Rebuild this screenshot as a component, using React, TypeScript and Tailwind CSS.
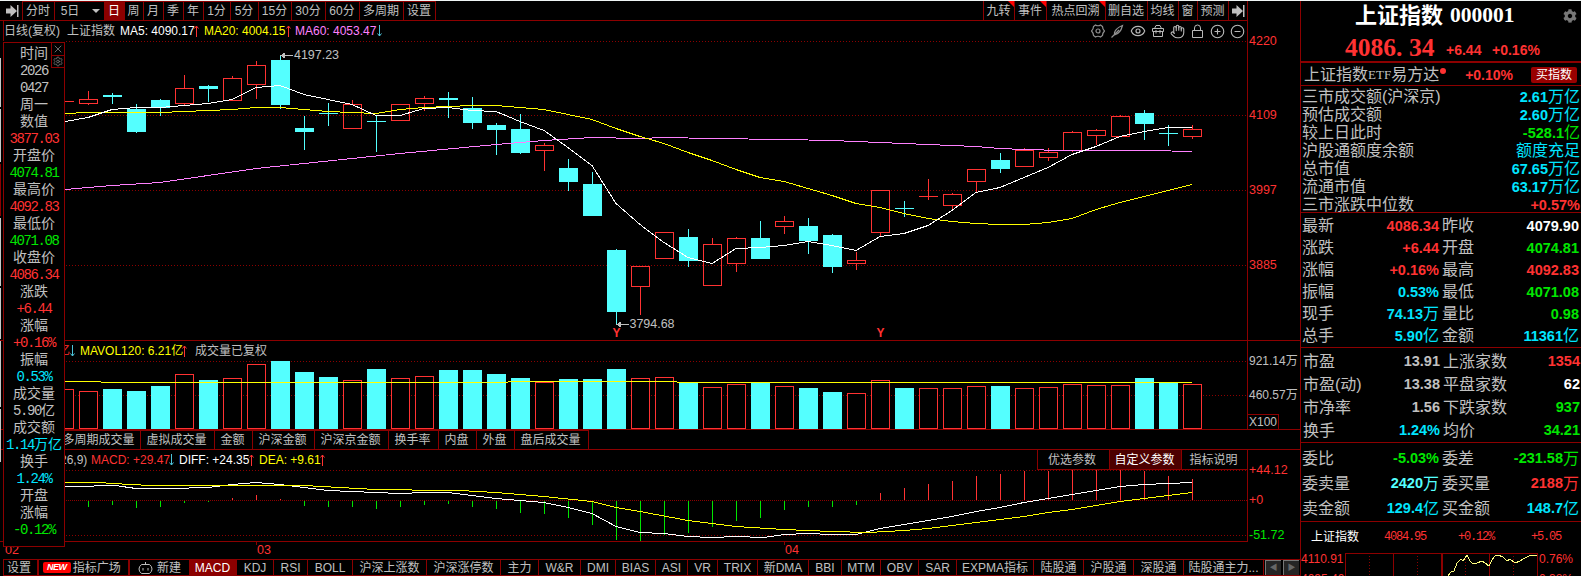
import clsx from 'clsx'
import { CircleMinus, CirclePlus, Eye, Hand, Lock, Settings, X } from 'lucide-react'
import { FaCog } from 'react-icons/fa'

const RED = '#ff3232'
const CYAN = '#54ffff'
const DARK = '#8c0000'

/* x centre, high, body top, body bottom, low, volume top, rising */
const candles = [
    [64, 101, 101, 102, 102, 389, 1],
    [88, 91, 99, 104, 105, 391, 1],
    [112, 93, 95, 97, 104, 389, 0],
    [136, 104, 109, 132, 133, 391, 0],
    [160, 99, 100, 108, 116, 386, 0],
    [184, 75, 88, 104, 105, 374, 1],
    [208, 85, 86, 89, 102, 380, 0],
    [232, 76, 78, 101, 101, 378, 1],
    [256, 61, 65, 85, 99, 364, 1],
    [280, 55, 60, 105, 109, 361, 0],
    [304, 116, 128, 132, 150, 372, 0],
    [328, 103, 113, 114, 126, 377, 0],
    [352, 100, 104, 129, 129, 380, 1],
    [376, 115, 121, 122, 152, 369, 0],
    [400, 104, 104, 121, 121, 378, 1],
    [424, 96, 98, 104, 111, 376, 1],
    [448, 92, 98, 100, 118, 370, 0],
    [472, 97, 108, 123, 129, 370, 0],
    [496, 123, 125, 130, 155, 374, 0],
    [520, 114, 129, 153, 154, 378, 0],
    [544, 143, 145, 151, 171, 382, 1],
    [568, 159, 168, 182, 191, 379, 0],
    [592, 172, 184, 216, 216, 379, 0],
    [616, 249, 250, 312, 325, 369, 0],
    [640, 266, 266, 287, 315, 378, 1],
    [664, 232, 232, 259, 259, 377, 1],
    [688, 229, 237, 261, 267, 383, 0],
    [712, 238, 244, 286, 286, 387, 1],
    [736, 237, 238, 264, 272, 384, 1],
    [760, 221, 238, 259, 259, 383, 0],
    [784, 216, 221, 227, 234, 386, 1],
    [808, 218, 226, 241, 254, 388, 0],
    [832, 234, 235, 267, 273, 392, 0],
    [856, 252, 260, 264, 270, 393, 1],
    [880, 190, 190, 233, 236, 380, 1],
    [904, 201, 208, 209, 217, 388, 0],
    [928, 179, 196, 197, 200, 388, 1],
    [952, 193, 194, 206, 209, 388, 1],
    [976, 169, 169, 182, 192, 386, 1],
    [1000, 153, 160, 169, 173, 386, 0],
    [1024, 148, 150, 167, 167, 388, 1],
    [1048, 148, 152, 158, 161, 387, 1],
    [1072, 131, 132, 151, 152, 384, 1],
    [1096, 129, 130, 136, 145, 385, 1],
    [1120, 115, 116, 137, 137, 385, 1],
    [1144, 110, 113, 124, 140, 378, 0],
    [1168, 125, 133, 134, 146, 382, 0],
    [1192, 125, 129, 137, 139, 384, 1],
]

/* tips of the MACD bars, the first one stands at x = 88 */
const macd = [
    507, 505, 508, 507, 503, 501, 498, 495, 499, 506, 507, 507, 509, 507, 505, 504, 507, 509, 513, 514, 518, 525, 540, 541,
    535, 533, 527, 521, 518, 510, 507, 507, 505, 493, 488, 484, 481, 476, 474, 471, 471, 470, 470, 470, 471, 476, 479,
]

const ma5 =
    '65,121 88,117 112,109 136,107 160,107 184,105 208,103 232,99 256,87 280,85 304,94 328,99 352,104 376,115 400,115 424,108 448,107 472,110 496,111 520,121 544,130 568,147 592,165 616,203 640,224 664,242 688,257 712,263 736,248 760,247 784,245 808,241 832,245 856,250 880,236 904,233 928,225 952,210 976,192 1000,187 1024,177 1048,167 1072,154 1096,146 1120,136 1144,131 1168,127 1192,127'
const ma20 =
    '65,113 88,112 160,112 184,111 208,110 232,109 256,107 280,107 304,109 328,111 352,112 376,113 400,109 424,107 448,106 472,105 496,105 520,107 544,109 568,114 592,119 616,128 640,136 664,143 688,152 712,160 736,169 760,177 784,181 808,188 832,195 856,203 880,207 904,213 928,218 952,221 976,223 1000,224 1024,224 1048,222 1072,218 1096,209 1120,202 1144,196 1168,190 1192,184'
const ma60 =
    '65,189 112,185 160,182 208,175 256,168 304,163 352,158 400,153 448,148.5 496,144 544,140 592,137 640,138 664,137 712,138 784,139 832,140 880,142 928,144 976,146 1000,148 1024,149 1064,150 1150,150 1192,151'
const diff =
    '65,486 88,486 100,485 115,485 136,488 170,488 208,487 232,484 256,482 280,484 304,487 328,490 376,492 400,493 424,492 448,492 472,495 496,498 520,500 544,502 568,507 592,513 616,526 640,532 664,533 688,536 712,537 736,536 764,537 784,534 808,533 832,534 856,534 880,528 904,524 928,520 952,516 976,511 1000,507 1024,502 1048,498 1072,494 1096,490 1120,486 1144,484 1168,483 1192,482'
const dea =
    '65,482 100,482 112,483 150,485 220,485 280,485 304,485 340,487 376,489 400,489 424,490 460,490 496,492 544,496 592,501 616,507 640,511 688,520 736,526 784,529 832,531 868,532 904,530 928,528 952,525 976,522 1000,519 1024,516 1048,512 1072,509 1096,505 1120,501 1144,498 1168,495 1192,492'

const periods = [
    { name: '分时', width: 'w-8' },
    { name: '5日', width: 'w-[49px]', arrow: true },
    { name: '日', width: 'w-[21px]', active: true },
    { name: '周', width: 'w-[19px]' },
    { name: '月', width: 'w-5' },
    { name: '季', width: 'w-5' },
    { name: '年', width: 'w-5' },
    { name: '1分', width: 'w-[27px]' },
    { name: '5分', width: 'w-7' },
    { name: '15分', width: 'w-[33px]' },
    { name: '30分', width: 'w-[34px]' },
    { name: '60分', width: 'w-[34px]' },
    { name: '多周期', width: 'w-[44px]' },
    { name: '设置', width: 'w-8' },
]

const tools = [
    { name: '九转', width: 'w-[31px]', mark: true },
    { name: '事件', width: 'w-8', mark: true },
    { name: '热点回溯', width: 'w-[59px]', mark: true },
    { name: '删自选', width: 'w-[42px]' },
    { name: '均线', width: 'w-[31px]' },
    { name: '窗', width: 'w-[19px]' },
    { name: '预测', width: 'w-[31px]' },
]

const volumeTabs = [
    { name: '多周期成交量', width: 'w-[82px]' },
    { name: '虚拟成交量', width: 'w-[74px]' },
    { name: '金额', width: 'w-[38px]' },
    { name: '沪深金额', width: 'w-[62px]' },
    { name: '沪深京金额', width: 'w-[74px]' },
    { name: '换手率', width: 'w-[50px]' },
    { name: '内盘', width: 'w-[38px]' },
    { name: '外盘', width: 'w-[38px]' },
    { name: '盘后成交量', width: 'w-[74px]' },
]

const indicators = [
    { name: 'MACD', width: 'w-[48px]', active: true },
    { name: 'KDJ', width: 'w-[37px]' },
    { name: 'RSI', width: 'w-[34px]' },
    { name: 'BOLL', width: 'w-[45px]' },
    { name: '沪深上涨数', width: 'w-[74px]' },
    { name: '沪深涨停数', width: 'w-[74px]' },
    { name: '主力', width: 'w-[38px]' },
    { name: 'W&R', width: 'w-[42px]' },
    { name: 'DMI', width: 'w-[35px]' },
    { name: 'BIAS', width: 'w-[40px]' },
    { name: 'ASI', width: 'w-8' },
    { name: 'VR', width: 'w-[30px]' },
    { name: 'TRIX', width: 'w-10' },
    { name: '新DMA', width: 'w-[51px]' },
    { name: 'BBI', width: 'w-[33px]' },
    { name: 'MTM', width: 'w-[39px]' },
    { name: 'OBV', width: 'w-[38px]' },
    { name: 'SAR', width: 'w-[38px]' },
    { name: 'EXPMA指标', width: 'w-[77px]' },
    { name: '陆股通', width: 'w-[50px]' },
    { name: '沪股通', width: 'w-[50px]' },
    { name: '深股通', width: 'w-[50px]' },
    { name: '陆股通主力...', width: 'w-20' },
]

const gray = 'text-[#c0c0c0]'
const red = 'text-[#ff3232]'
const green = 'text-[#00e600]'
const cyan = 'text-[#00e5ff]'

const dataRows = [
    ['时间', gray], ['2026', gray], ['0427', gray], ['周一', gray],
    ['数值', gray], ['3877.03', red],
    ['开盘价', gray], ['4074.81', green],
    ['最高价', gray], ['4092.83', red],
    ['最低价', gray], ['4071.08', green],
    ['收盘价', gray], ['4086.34', red],
    ['涨跌', gray], ['+6.44', red],
    ['涨幅', gray], ['+0.16%', red],
    ['振幅', gray], ['0.53%', cyan],
    ['成交量', gray], ['5.90亿', gray],
    ['成交额', gray], ['1.14万亿', cyan],
    ['换手', gray], ['1.24%', cyan],
    ['开盘', gray], ['涨幅', gray], ['-0.12%', green],
]

const market = [
    ['三市成交额(沪深京)', '2.61', '万亿', cyan],
    ['预估成交额', '2.60', '万亿', cyan],
    ['较上日此时', '-528.1', '亿', green],
    ['沪股通额度余额', '', '额度充足', cyan],
    ['总市值', '67.65', '万亿', cyan],
    ['流通市值', '63.17', '万亿', cyan],
    ['三市涨跌中位数', '+0.57%', '', red],
]

const quotes = [
    ['最新', '4086.34', '', red, '昨收', '4079.90', '', 'text-white'],
    ['涨跌', '+6.44', '', red, '开盘', '4074.81', '', green],
    ['涨幅', '+0.16%', '', red, '最高', '4092.83', '', red],
    ['振幅', '0.53%', '', cyan, '最低', '4071.08', '', green],
    ['现手', '74.13', '万', cyan, '量比', '0.98', '', green],
    ['总手', '5.90', '亿', cyan, '金额', '11361', '亿', cyan],
]

const breadth = [
    ['市盈', '13.91', '', gray, '上涨家数', '1354', '', red],
    ['市盈(动)', '13.38', '', gray, '平盘家数', '62', '', 'text-white'],
    ['市净率', '1.56', '', gray, '下跌家数', '937', '', green],
    ['换手', '1.24%', '', cyan, '均价', '34.21', '', green],
]

const orders = [
    ['委比', '-5.03%', '', green, '委差', '-231.58', '万', green],
    ['委卖量', '2420', '万', 'text-[#54ffff]', '委买量', '2188', '万', red],
    ['卖金额', '129.4', '亿', cyan, '买金额', '148.7', '亿', cyan],
]

function Arrow({ down = false }: { down?: boolean }) {
    return (
        <svg width="6" height="12" viewBox="0 0 6 12" fill="none" stroke={down ? '#4cc3d9' : RED} className="shrink-0">
            {down ? <path d="M2.500 0V11M.5 8.500l2 2.500 2-2.500" /> : <path d="M2.500 12V1M.5 3.500l2-2.500 2 2.500" />}
        </svg>
    )
}

function SkipIcon() {
    return (
        <svg width="13" height="12" viewBox="0 0 13 12" fill="#c0c0c0" className="shrink-0">
            <path d="M0 3.500h4.500V0L11 6l-6.500 6V8.500H0zM11 0h1.500v12H11z" />
        </svg>
    )
}

function Grid({ rows }: { rows: number[] }) {
    return rows.map((y) => (
        <line key={y} x1="66" x2="1247" y1={y + 0.5} y2={y + 0.5} stroke={DARK} strokeDasharray="1 2" />
    ))
}

function PriceChart() {
    return (
        <svg width="1182" height="299" viewBox="65 41 1182 299" shapeRendering="crispEdges">
            <Grid rows={[41, 115, 190, 265]} />
            {candles.map(([x, high, top, bottom, low, , up]) => (
                <g key={x} fill={up ? RED : CYAN}>
                    <rect x={x} y={high} width="1" height={Math.max(top - high, 0)} />
                    <rect x={x} y={bottom} width="1" height={Math.max(low - bottom, 0)} />
                    {up && bottom - top > 1 ? (
                        <rect x={x - 8.5} y={top + 0.5} width="18" height={bottom - top - 1} fill="none" stroke={RED} />
                    ) : (
                        <rect x={x - 9} y={top} width="19" height={bottom - top} />
                    )}
                </g>
            ))}
            <g fill="none" transform="translate(0 .5)">
                <polyline points={ma60} stroke="#ff80ff" />
                <polyline points={ma20} stroke="#ffff00" />
                <polyline points={ma5} stroke="#ffffff" />
            </g>
            <g stroke="#c0c0c0" fill="#c0c0c0">
                <path d="M281 55.500h12M281 55.500l3-2v4z" />
                <path d="M617 324.500h12M617 324.500l3-2v4z" />
            </g>
            <g fill="#c0c0c0" fontSize="12.500" fontFamily="'Liberation Sans', sans-serif">
                <text x="294" y="59" textLength="45">4197.23</text>
                <text x="629.500" y="328" textLength="45">3794.68</text>
            </g>
            <g fill={RED} fontSize="12" fontWeight="bold" fontFamily="'Liberation Sans', sans-serif">
                <text x="612.500" y="337">Y</text>
                <text x="876.500" y="337">Y</text>
            </g>
        </svg>
    )
}

function VolumeChart() {
    return (
        <svg width="1182" height="69" viewBox="65 360 1182 69" shapeRendering="crispEdges">
            <Grid rows={[361, 395]} />
            {candles.map(([x, , , , , top, up]) =>
                up ? (
                    <rect key={x} x={x - 8.5} y={top + 0.5} width="18" height={428 - top} fill="#000" stroke={RED} />
                ) : (
                    <rect key={x} x={x - 9} y={top} width="19" height={429 - top} fill={CYAN} />
                ),
            )}
            <path d="M65 381.500H101M101 382.500H508M508 381.500H677M677 382.500H1192" stroke="#ffff00" />
        </svg>
    )
}

function MacdChart() {
    return (
        <svg width="1182" height="72" viewBox="65 469 1182 72" shapeRendering="crispEdges">
            <Grid rows={[470, 535]} />
            <line x1="66" x2="1247" y1="500.500" y2="500.500" stroke={DARK} strokeDasharray="1 1" />
            {macd.map((y, i) => (
                <rect
                    key={i}
                    x={88 + i * 24}
                    y={y < 500 ? y : 501}
                    width="1"
                    height={y < 500 ? 500 - y : Math.max(y - 501, 1)}
                    fill={y < 500 ? RED : '#00e600'}
                />
            ))}
            <g fill="none" transform="translate(0 .5)">
                <polyline points={diff} stroke="#ffffff" />
                <polyline points={dea} stroke="#ffff00" />
            </g>
        </svg>
    )
}

function Toolbar() {
    return (
        <div className="flex h-5 w-[1248px] border-r border-b border-[#8c0000]">
            <div className="flex w-[23px] items-center justify-end border-r border-[#8c0000] pr-[3px]">
                <SkipIcon />
            </div>
            {periods.map((item) => (
                <div
                    key={item.name}
                    className={clsx(
                        'flex shrink-0 items-center justify-center border-t border-[#8c0000] pr-px whitespace-nowrap',
                        item.width,
                        item.active ? 'bg-[#8c0000] text-white' : !item.arrow && 'border-r',
                    )}
                >
                    {item.name}
                    {item.arrow && <span className="-mr-[3px] ml-[13px] border-x-4 border-t-4 border-x-transparent border-t-[#c0c0c0]" />}
                </div>
            ))}
            <div className="ml-auto flex border-l border-[#8c0000]">
                {tools.map((item) => (
                    <div key={item.name} className={clsx('relative flex items-center justify-center border-r border-[#8c0000] pr-px whitespace-nowrap', item.width)}>
                        {item.name}
                        {item.mark && <span className="absolute top-0 right-0 border-t-[6px] border-l-[6px] border-t-[#ff0000] border-l-transparent" />}
                    </div>
                ))}
                <div className="flex w-[18px] items-center justify-center">
                    <SkipIcon />
                </div>
            </div>
        </div>
    )
}

function ChartIcons() {
    return (
        <div className="mr-[2px] ml-auto flex items-center gap-[5px] text-[#b8b8b8]">
            <svg width="14" height="14" viewBox="0 0 14 14" fill="none" stroke="#909090" strokeWidth="1.200">
                <path d="M4.500 1q2.500 1.500 5 0l2 1.500q0 2.500 2 4.500-2 2-2 4.500l-2 1.500q-2.500-1.500-5 0l-2-1.500q0-2.500-2-4.500 2-2 2-4.500z" />
                <circle cx="7" cy="7" r="2" />
            </svg>
            <svg width="15" height="15" viewBox="0 0 15 15" fill="none" stroke="#909090" strokeWidth="1.200">
                <path d="M1.500 13.500 9 6M12.500 1.500Q6 4 4.500 8.500V11Q10.500 9.500 12.500 1.500z" />
            </svg>
            <Eye size={16} strokeWidth={1.800} />
            <svg width="14" height="14" viewBox="0 0 14 14" fill="none" stroke="currentColor">
                <path d="M3.500 4.500 5 1.500h4l1.500 3M1.500 4.500h11v3h-11zM2.500 7.500v5h9v-5M5 6v3.500M9 6v3.500" />
            </svg>
            <Hand size={15} strokeWidth={1.800} />
            <svg width="15" height="15" viewBox="0 0 15 15" fill="none" stroke="currentColor">
                <path d="M2.500 6.500h10v7h-10zM4.500 6V4a3 3 0 0 1 6 0v2" />
            </svg>
            <CirclePlus size={15} strokeWidth={1.800} />
            <CircleMinus size={15} strokeWidth={1.800} />
        </div>
    )
}

function DataPanel() {
    return (
        <div className="absolute top-[41px] left-[3px] flex h-[505px] w-[62px] flex-col items-center border border-[#8c0000] bg-black pt-[3px]">
            {dataRows.map(([text, color], i) => (
                <div key={i} className={clsx('h-[17px] font-[Liberation_Mono,Noto_Sans_CJK_SC,monospace] text-[14px]/[17px] whitespace-nowrap', color)}>
                    {text.split(/([万亿]+)/).map((part, n) => (
                        <span key={n} className={/^[-+.%\d]+$/.test(part) ? 'tracking-[-1.4px]' : ''}>
                            {part}
                        </span>
                    ))}
                </div>
            ))}
            <div className="absolute -top-px -right-px flex w-[14px] flex-col border border-[#8c0000] text-[#777]">
                <X size={12} strokeWidth={1.800} />
                <Settings size={12} strokeWidth={1.800} className="border-t border-[#8c0000]" />
            </div>
        </div>
    )
}

function IndicatorBar() {
    return (
        <div className="ml-[3px] flex h-[17px] w-[1297px] border-y border-l border-[#8c0000] text-[12px] leading-none">
            <div className="flex w-[34px] items-center justify-center border-r border-[#8c0000] pr-[3px]">设置</div>
            <div className="flex w-[91px] items-center gap-[2px] border-x border-[#8c0000] pl-1">
                <span className="rounded-xs bg-[#ff0000] px-1 text-[9px]/[11px] font-bold tracking-tighter text-white italic">NEW</span>
                指标广场
            </div>
            <div className="flex w-[60px] items-center gap-[4px] border-l border-[#8c0000] pl-2">
                <svg width="15" height="12" viewBox="0 0 15 12" fill="none" stroke="#c0c0c0">
                    <path d="M7.500 0v2M3.500 2.500h8q2.500 2 2.500 4.500t-2.500 4.500h-8Q1 9.500 1 7t2.500-4.500z" />
                    <path d="M5 6v2.500M10 6v2.500" />
                </svg>
                新建
            </div>
            {indicators.map((item) => (
                <div
                    key={item.name}
                    className={clsx(
                        'flex shrink-0 items-center justify-center border-r border-[#8c0000] whitespace-nowrap',
                        item.width,
                        item.active && 'bg-[#8c0000] text-white',
                    )}
                >
                    {item.name}
                </div>
            ))}
            <div className="ml-px flex gap-[2px] text-[8px] text-[#666]">
                <span className="flex w-4 items-center justify-center border-t border-l border-[#777] bg-[#252525]">◀</span>
                <span className="flex w-4 items-center justify-center border-t border-l border-[#777] bg-[#252525]">▶</span>
            </div>
        </div>
    )
}

function Value({ number, unit, color }: { number: string; unit: string; color: string }) {
    return (
        <span className={clsx('ml-auto flex items-center', color)}>
            <b className="text-[14.5px]">{number}</b>
            {unit}
        </span>
    )
}

function PairRows({ rows, height }: { rows: string[][]; height: string }) {
    return (
        <div className={clsx('flex flex-col border-b border-[#8c0000]', height)}>
            {rows.map((row) => (
                <div key={row[0]} className="flex flex-1 items-center">
                    <div className="flex w-[137px] items-center">
                        {row[0]}
                        <Value number={row[1]} unit={row[2]} color={row[3]} />
                    </div>
                    <div className="ml-[3px] flex w-[137px] items-center">
                        {row[4]}
                        <Value number={row[5]} unit={row[6]} color={row[7]} />
                    </div>
                </div>
            ))}
        </div>
    )
}

function QuotePanel() {
    return (
        <aside className="flex w-[281px] flex-col overflow-hidden border-l border-[#8c0000] text-[16px] leading-none whitespace-nowrap text-[#c0c0c0]">
            <div className="flex h-[60px] flex-col">
                <div className="flex h-7 items-center pt-px pl-[54px] font-[Liberation_Serif,Noto_Sans_CJK_SC,serif] text-[22px] font-bold text-white">
                    上证指数
                    <span className="ml-[7px] text-[21.5px]">000001</span>
                    <FaCog size={14} className="mr-[4px] ml-auto text-[#777]" />
                </div>
                <div className="flex h-8 items-center pt-[4px] pl-[44px] text-[#ff3232]">
                    <span className="w-[101px] pt-px font-[Liberation_Serif,serif] text-[25.5px] font-bold">
                        4086<span className="tracking-[6.5px]">.</span>34
                    </span>
                    <b className="mt-[5px] w-[46px] text-[14px]">+6.44</b>
                    <b className="mt-[5px] text-[14px]">+0.16%</b>
                </div>
            </div>
            <div className="flex h-[25px] items-center border-t-2 border-b border-[#8c0000] pt-px pl-[3px]">
                上证指数<span className="font-[Liberation_Serif,serif] text-[13px]">ETF</span>易方达
                <i className="mb-2 ml-px size-[6px] rounded-full bg-[#ff3232]" />
                <b className="ml-[19px] text-[14px] text-[#ff3232]">+0.10%</b>
                <span className="mr-1 ml-auto flex h-4 w-[46px] items-center justify-center rounded-xs bg-[#990000] text-[12px] text-white">买指数</span>
            </div>
            <div className="flex h-[127px] flex-col border-b border-[#8c0000] pt-px pl-px">
                {market.map((row) => (
                    <div key={row[0]} className="flex h-[18px] w-[278px] items-center pt-[2px]">
                        {row[0]}
                        <Value number={row[1]} unit={row[2]} color={row[3]} />
                    </div>
                ))}
            </div>
            <PairRows rows={quotes} height="h-[135px] pt-[2px] pl-[1px]" />
            <PairRows rows={breadth} height="h-[95px] pt-[2px] pl-[2px]" />
            <PairRows rows={orders} height="h-[79px] pt-[3px] pl-[1px]" />
            <div className="flex h-[29px] items-center pt-px pl-[10px] text-[12px]">
                <span className="w-[73px] text-white">上证指数</span>
                <span className="w-[74px] font-[Liberation_Mono,monospace] tracking-[-1.2px] text-[#ff3232]">4084.95</span>
                <span className="w-[73px] font-[Liberation_Mono,monospace] tracking-[-1.2px] text-[#ff3232]">+0.12%</span>
                <span className="font-[Liberation_Mono,monospace] tracking-[-1.2px] text-[#ff3232]">+5.05</span>
            </div>
            <div className="flex h-[25px] overflow-hidden text-[12px]/[14px] text-[#ff3232]">
                <div className="flex w-11 flex-col gap-[6px] pt-px">
                    <span>4110.91</span>
                    <span>4095.40</span>
                </div>
                <svg width="193" height="25" viewBox="1345 551 193 25" fill="none" stroke={DARK} shapeRendering="crispEdges" className="shrink-0">
                    <path d="M1345.500 576V553.500H1537.500V576M1393.500 553V576M1489.500 553V576" />
                    <path d="M1442 553V576" strokeWidth="2" />
                    <path d="M1369.500 556V576M1417.500 556V576M1465.500 556V576M1513.500 556V576" strokeDasharray="1 2" />
                    <polyline
                        stroke="#ffff80"
                        points="1443,576 1447,577 1451,572 1454,571 1457,563 1461,559 1463,561 1467,555 1470,561 1473,564 1477,563 1482,561 1485,563 1489,566 1492,560 1495,556 1498,555 1503,557 1507,561 1510,559 1515,563 1520,561 1525,558 1529,556 1533,555 1537,556"
                    />
                </svg>
                <div className="ml-px flex flex-col gap-[6px] pt-px">
                    <span>0.76%</span>
                    <span>0.38%</span>
                </div>
            </div>
        </aside>
    )
}

export default function App() {
    return (
        <div className="relative flex h-[576px] w-[1581px] overflow-hidden border-t border-[#eef4f4] bg-black font-[Liberation_Sans,Noto_Sans_CJK_SC,sans-serif]">
            <main className="flex w-[1300px] flex-col text-[12px] leading-none text-[#c0c0c0]">
                <Toolbar />
                <section className="flex h-[320px] border-b border-[#8c0000]">
                    <div className="flex w-[1248px] flex-col border-r border-[#8c0000]">
                        <div className="ml-[3px] flex h-5 items-center border-l border-[#8c0000] whitespace-nowrap">
                            <span className="w-[63px]">日线(复权)</span>
                            <span className="w-[53px]">上证指数</span>
                            <span className="w-[74px] text-white">MA5: 4090.17</span>
                            <Arrow />
                            <span className="ml-[4px] w-[82px] text-[#ffff00]">MA20: 4004.15</span>
                            <Arrow />
                            <span className="ml-[3px] w-[82px] text-[#ff80ff]">MA60: 4053.47</span>
                            <Arrow down />
                            <ChartIcons />
                        </div>
                        <div className="ml-[65px]">
                            <PriceChart />
                        </div>
                    </div>
                    <div className="flex flex-col pt-3 pl-px text-[12.500px] leading-4 text-[#ff3232]">
                        <span>4220</span>
                        <span className="mt-[58px]">4109</span>
                        <span className="mt-[59px]">3997</span>
                        <span className="mt-[59px]">3885</span>
                    </div>
                </section>
                <section className="flex h-[89px] border-b border-[#8c0000]">
                    <div className="flex w-[1248px] flex-col border-r border-[#8c0000]">
                        <div className="flex h-[19px] items-center pt-px pl-[58px] whitespace-nowrap">
                            <span className="w-[12px] text-[#ff3232]">亿</span>
                            <Arrow down />
                            <span className="ml-[4px] w-[102px] text-[#ffff00]">MAVOL120: 6.21亿</span>
                            <Arrow />
                            <span className="ml-[7px]">成交量已复权</span>
                        </div>
                        <div className="ml-[65px]">
                            <VolumeChart />
                        </div>
                    </div>
                    <div className="flex flex-col items-start overflow-hidden pt-3 leading-4 whitespace-nowrap">
                        <span className="pl-px">921.14万</span>
                        <span className="mt-[18px] pl-px">460.57万</span>
                        <span className="mt-[11px] -ml-px border border-b-0 border-[#8c0000] px-px text-[12px]/[14px]">X100</span>
                    </div>
                </section>
                <div className="flex h-5 border-b border-[#8c0000] pl-[59px]">
                    {volumeTabs.map((item) => (
                        <div key={item.name} className={clsx('flex items-center justify-center border-t border-r border-[#8c0000] pr-[2px] whitespace-nowrap', item.width)}>
                            {item.name}
                        </div>
                    ))}
                </div>
                <section className="flex h-[92px]">
                    <div className="flex w-[1248px] flex-col border-r border-b border-[#8c0000]">
                        <div className="flex h-[19px] items-center pl-[60px] whitespace-nowrap">
                            <span className="w-[31px]">26,9)</span>
                            <span className="w-[78px] text-[#ff3232]">MACD: +29.47</span>
                            <Arrow down />
                            <span className="ml-[4px] w-[70px] text-white">DIFF: +24.35</span>
                            <Arrow />
                            <span className="ml-[4px] w-[61px] text-[#ffff00]">DEA: +9.61</span>
                            <Arrow />
                            <div className="ml-auto flex h-[20px] self-start">
                                <span className="flex w-[72px] items-center justify-center border-b border-l border-[#8c0000] pr-[3px]">优选参数</span>
                                <span className="flex w-[73px] items-center justify-center border border-t-0 border-[#8c0000] bg-[#4c0000] pr-[2px] text-white">自定义参数</span>
                                <span className="flex w-[65px] items-center justify-center border-b border-[#8c0000] pr-[2px]">指标说明</span>
                            </div>
                        </div>
                        <div className="ml-[65px]">
                            <MacdChart />
                        </div>
                    </div>
                    <div className="flex flex-col pt-3 pl-px text-[12.500px] leading-4 text-[#ff3232]">
                        <span>+44.12</span>
                        <span className="mt-[14px]">+0</span>
                        <span className="mt-[19px] text-[#00e600]">-51.72</span>
                    </div>
                </section>
                <div className="flex h-[17px] items-start pl-[5px] text-[12.500px]/[17px] text-[#ff3232]">
                    <span className="w-[251px]">02</span>
                    <span className="h-[3px] w-px bg-[#8c0000]" />
                    <span className="w-[527px]">03</span>
                    <span className="h-[3px] w-px bg-[#8c0000]" />
                    <span>04</span>
                </div>
                <IndicatorBar />
            </main>
            <QuotePanel />
            <div className="absolute top-[57px] left-0 flex flex-col gap-[2px]">
                <i className="h-[49px] w-px bg-[#c8c8c8]" />
                <i className="h-[53px] w-px bg-[#c8c8c8]" />
                <i className="h-[52px] w-px bg-[#8c0000]" />
                <i className="h-[68px] w-px bg-[#c8c8c8]" />
                <i className="h-[51px] w-px bg-[#c8c8c8]" />
                <i className="h-[66px] w-px bg-[#c8c8c8]" />
                <i className="h-[53px] w-px bg-[#c8c8c8]" />
            </div>
            <DataPanel />
        </div>
    )
}
